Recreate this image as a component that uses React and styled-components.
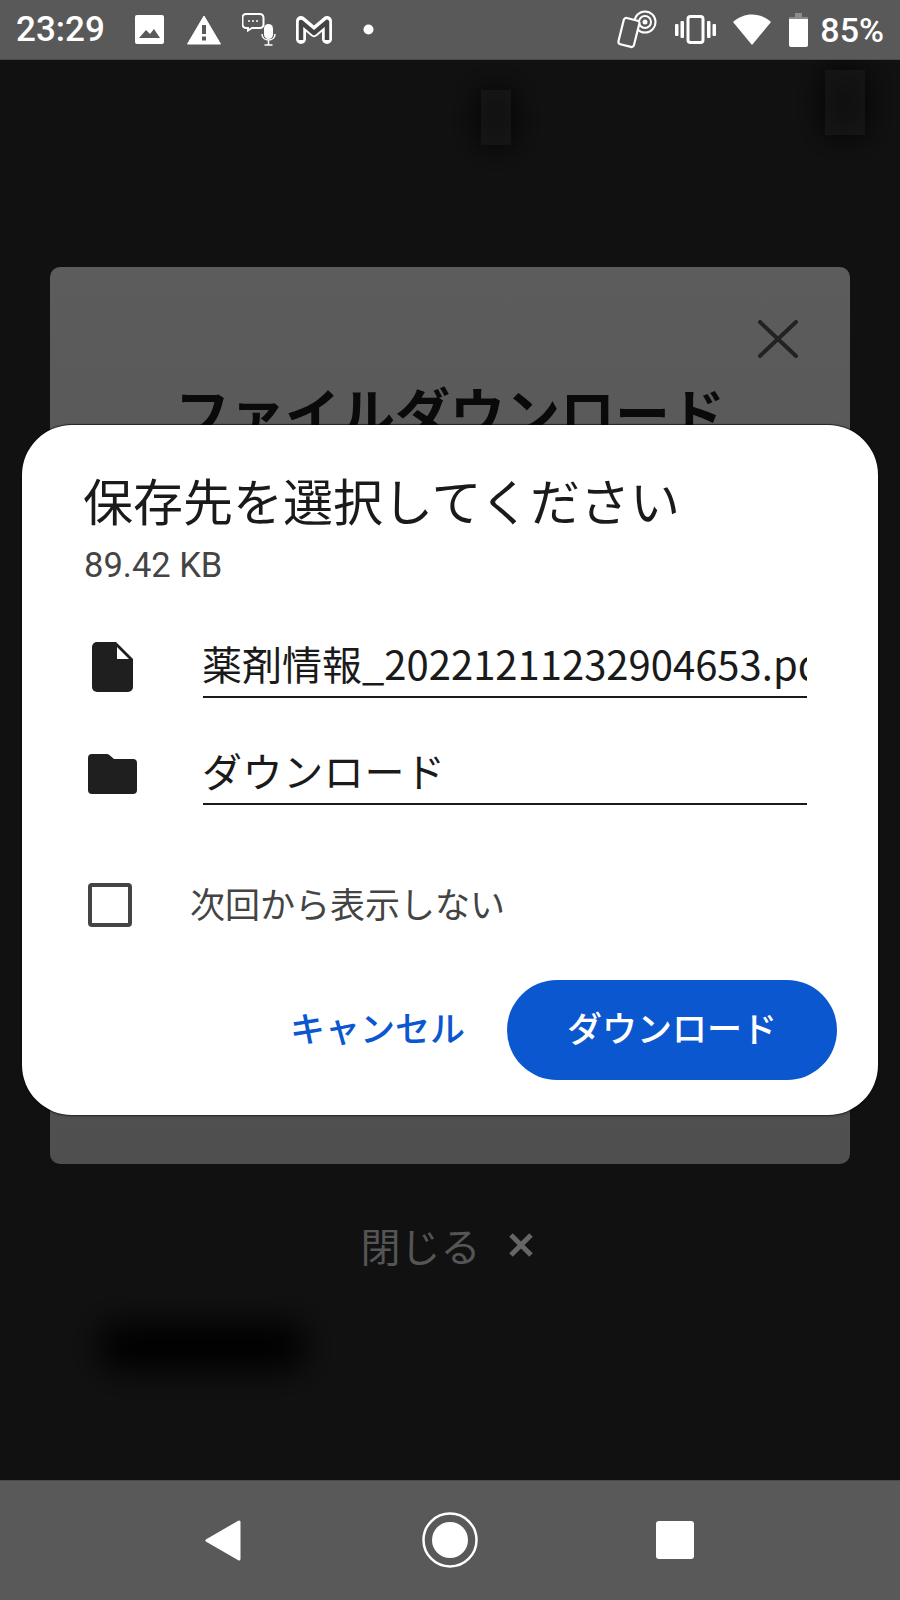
import React from 'react'
import styled, { createGlobalStyle } from 'styled-components'

const JP = `"Noto Sans CJK JP", "Roboto", sans-serif`
const BAR = '#595959'

const GlobalStyle = createGlobalStyle`
  html, body {
    margin: 0;
    padding: 0;
    background: #111;
  }
  * { box-sizing: border-box; }
`

const Screen = styled.div`
  width: 900px;
  height: 1600px;
  display: flex;
  flex-direction: column;
  overflow: hidden;
`

const StatusBar = styled.div`
  height: 60px;
  flex: none;
  background: ${BAR};
  display: flex;
  align-items: center;
  justify-content: space-between;
  padding: 0 16px;
  border-bottom: 1px solid #4a4a4a;
  color: #fff;
  font-family: Roboto, sans-serif;
`

const StatusGroup = styled.div`
  display: flex;
  align-items: center;
`

const Clock = styled.span`
  font-size: 35px;
  font-weight: 500;
  line-height: 60px;
  width: 87px;
  white-space: nowrap;
`

const Percent = styled.span`
  font-size: 34px;
  font-weight: 500;
  line-height: 60px;
  margin-left: 12px;
`

const StatusIcon = styled.svg`
  display: block;
  flex: none;
  margin-left: ${p => p.$gap || 0}px;
`

const Main = styled.div`
  flex: 1;
  position: relative;
  background: #111;
  padding-top: 207px;
  display: flex;
  flex-direction: column;
  align-items: center;
`

const BlurLayer = styled.svg`
  position: absolute;
  left: 0;
  top: 0;
`

const BackCard = styled.div`
  position: relative;
  width: 800px;
  height: 897px;
  flex: none;
  border-radius: 10px;
  background: linear-gradient(#5c5c5c, #4f4f4f);
  text-align: center;
`

const BackClose = styled.svg`
  position: absolute;
  right: 52px;
  top: 53px;
`

const BackTitle = styled.h2`
  margin: 0;
  padding-top: 107px;
  font-family: ${JP};
  font-size: 55px;
  line-height: 72px;
  font-weight: 700;
  color: #0a0a0a;
`

const CloseRow = styled.div`
  margin-top: 53px;
  height: 56px;
  display: flex;
  align-items: center;
  gap: 27px;
  position: relative;
  font-family: ${JP};
  font-size: 40px;
  color: #555;
  transform: translateX(-3px);
`

const Dialog = styled.div`
  position: absolute;
  left: 22px;
  top: 365px;
  width: 856px;
  height: 690px;
  background: #fff;
  border-radius: 50px;
  padding-top: 43px;
  box-shadow: 0 -1px 1px rgba(0, 0, 0, 0.6), 0 1px 2px rgba(0, 0, 0, 0.6);
`

const Title = styled.h1`
  margin: 0 0 0 61px;
  font-family: ${JP};
  font-size: 50px;
  line-height: 62px;
  font-weight: 400;
  color: #1a1a1a;
`

const Size = styled.div`
  margin: 15px 0 0 62px;
  font-family: Roboto, sans-serif;
  font-size: 34.5px;
  line-height: 40px;
  color: #444;
`

const FieldRow = styled.div`
  margin: ${p => p.$top}px 0 0 66px;
  display: grid;
  grid-template-columns: 115px 604px;
  align-items: center;
`

const Field = styled.div`
  height: 63px;
  border-bottom: 2px solid #1a1a1a;
  font-family: ${JP};
  font-size: 40px;
  line-height: 57px;
  letter-spacing: ${p => p.$spacing || 0}px;
  color: #1a1a1a;
  white-space: nowrap;
  overflow: hidden;
  text-indent: -1px;
`

const CheckRow = styled.label`
  margin: 78px 0 0 66px;
  height: 44px;
  display: flex;
  align-items: center;
  gap: 58px;
`

const Box = styled.span`
  width: 44px;
  height: 44px;
  flex: none;
  border: 4px solid #444;
  border-radius: 4px;
`

const CheckText = styled.span`
  font-family: ${JP};
  font-size: 35px;
  line-height: 40px;
  padding-bottom: 4px;
  color: #444;
  white-space: nowrap;
`

const Actions = styled.div`
  margin-top: 53px;
  padding-right: 41px;
  display: flex;
  justify-content: flex-end;
  align-items: center;
  gap: 42px;
`

const CancelButton = styled.button`
  border: 0;
  padding: 0 0 8px;
  background: none;
  font-family: ${JP};
  font-size: 35px;
  font-weight: 500;
  color: #0b57cf;
`

const PrimaryButton = styled.button`
  width: 330px;
  height: 100px;
  border: 0;
  border-radius: 50px;
  padding: 0 0 8px;
  background: #0b57cf;
  font-family: ${JP};
  font-size: 35px;
  font-weight: 500;
  color: #fff;
`

const NavBar = styled.div`
  height: 120px;
  flex: none;
  background: ${BAR};
  border-top: 1px solid #4a4a4a;
  position: relative;
  display: grid;
  grid-template-columns: 205px 40px 177px 55px 179px 38px;
  align-items: center;
  padding-bottom: 1px;
`

const NavIcon = styled.svg`
  display: block;
  grid-column: ${p => p.$col};
`

const App = () => (
  <Screen>
    <GlobalStyle />
    <StatusBar>
      <StatusGroup>
        <Clock>23:29</Clock>
        <StatusIcon $gap={32} width="29" height="29" viewBox="0 0 29 29">
          <rect width="29" height="29" rx="2" fill="#fff" />
          <path d="M4 23l7-8 4 4 4-5 6 9z" fill={BAR} />
        </StatusIcon>
        <StatusIcon $gap={23} width="34" height="30" viewBox="0 0 34 30">
          <path d="M17 1L33.500 29H.5z" fill="#fff" stroke="#fff" strokeLinejoin="round" />
          <rect x="15" y="10" width="4" height="9" fill={BAR} />
          <rect x="15" y="21.500" width="4" height="4" fill={BAR} />
        </StatusIcon>
        <StatusIcon $gap={21} width="34" height="33" viewBox="0 0 34 33">
          <path d="M4 1h14a3.500 3.500 0 0 1 3.500 3.500v7a3.500 3.500 0 0 1-3.500 3.500h-8l-4 2.500v-2.500h-2a3.500 3.500 0 0 1-3.500-3.500v-7a3.500 3.500 0 0 1 3.500-3.500z" fill="none" stroke="#fff" strokeWidth="2" />
          <circle cx="7" cy="8" r="1" fill="#fff" />
          <circle cx="11" cy="8" r="1" fill="#fff" />
          <circle cx="15" cy="8" r="1" fill="#fff" />
          <rect x="22" y="11" width="9" height="15" rx="4.500" fill="#fff" />
          <path d="M20 21c0 8 13 8 13 0M26.500 27v5M22.500 32h8" fill="none" stroke="#fff" strokeWidth="1.500" />
        </StatusIcon>
        <StatusIcon $gap={20} width="36" height="28" viewBox="0 0 36 28">
          <path d="M5 23V5l13 11L31 5v18" fill="none" stroke="#fff" strokeWidth="10" strokeLinejoin="round" strokeLinecap="round" />
          <path d="M5 24V6l13 11L31 6v18" fill="none" stroke="#444" strokeWidth="4.500" strokeLinejoin="round" />
        </StatusIcon>
        <StatusIcon $gap={31} width="11" height="11" viewBox="0 0 11 11">
          <circle cx="5.500" cy="5.500" r="5" fill="#fff" />
        </StatusIcon>
      </StatusGroup>
      <StatusGroup>
        <StatusIcon width="40" height="39" viewBox="0 0 40 39">
          <circle cx="28" cy="12" r="10.500" fill="none" stroke="#fff" strokeWidth="2" />
          <circle cx="28" cy="12" r="6" fill="none" stroke="#fff" strokeWidth="2" />
          <circle cx="28" cy="12" r="2.500" fill="#fff" />
          <rect x="4" y="9" width="16" height="27" rx="2.500" transform="rotate(14 12 22)" fill={BAR} stroke="#fff" strokeWidth="2.200" />
        </StatusIcon>
        <StatusIcon $gap={18} width="41" height="29" viewBox="0 0 41 29">
          <rect x="13" y="1.500" width="15" height="26" rx="2.500" fill="none" stroke="#fff" strokeWidth="3" />
          <rect x="0" y="9" width="3.500" height="12" rx="1" fill="#fff" />
          <rect x="5.500" y="6" width="3.500" height="17" rx="1" fill="#fff" />
          <rect x="32" y="6" width="3.500" height="17" rx="1" fill="#fff" />
          <rect x="37.500" y="9" width="3.500" height="12" rx="1" fill="#fff" />
        </StatusIcon>
        <StatusIcon $gap={17} width="38" height="31" viewBox="0 0 38 31">
          <path d="M0 8C11-2 27-2 38 8L19 31z" fill="#fff" />
        </StatusIcon>
        <StatusIcon $gap={18} width="19" height="34" viewBox="0 0 19 34">
          <path d="M6 0h7v4h5a1 1 0 0 1 1 1v6H0V5a1 1 0 0 1 1-1h5z" fill="#8c8c8c" />
          <path d="M0 6h19v26a2 2 0 0 1-2 2H2a2 2 0 0 1-2-2z" fill="#fff" />
        </StatusIcon>
        <Percent>85%</Percent>
      </StatusGroup>
    </StatusBar>

    <Main>
      <BlurLayer width="900" height="1420" viewBox="0 0 900 1420">
        <defs>
          <filter id="soft" x="-100%" y="-100%" width="300%" height="300%">
            <feGaussianBlur stdDeviation="16" />
          </filter>
        </defs>
        <g filter="url(#soft)">
          <rect x="100" y="1262" width="205" height="48" rx="16" fill="#020202" />
          <rect x="480" y="30" width="32" height="55" fill="#100f0c" />
          <rect x="825" y="10" width="40" height="65" fill="#100f0c" />
        </g>
      </BlurLayer>
      <BackCard>
        <BackClose width="40" height="38" viewBox="0 0 40 38">
          <path d="M2 2l36 34M38 2L2 36" stroke="#222" strokeWidth="4" strokeLinecap="round" />
        </BackClose>
        <BackTitle>ファイルダウンロード</BackTitle>
      </BackCard>
      <CloseRow>
        閉じる
        <svg width="26" height="24" viewBox="0 0 26 24">
          <path d="M3 2l20 20M23 2L3 22" stroke="#666" strokeWidth="5" />
        </svg>
      </CloseRow>

      <Dialog>
        <Title>保存先を選択してください</Title>
        <Size>89.42 KB</Size>
        <FieldRow $top={50}>
          <svg width="49" height="50" viewBox="0 0 49 50">
            <path d="M9 0h19l17 17v28a5 5 0 0 1-5 5H9a5 5 0 0 1-5-5V5a5 5 0 0 1 5-5z" fill="#1f1f1f" />
            <path d="M29 5l12 12H29z" fill="#fff" />
          </svg>
          <Field>薬剤情報_20221211232904653.pdf</Field>
        </FieldRow>
        <FieldRow $top={44}>
          <svg width="49" height="40" viewBox="0 0 49 40">
            <path d="M4 0h15a4 4 0 0 1 3 1.500L26 5h19a4 4 0 0 1 4 4v27a4 4 0 0 1-4 4H4a4 4 0 0 1-4-4V4a4 4 0 0 1 4-4z" fill="#1f1f1f" />
          </svg>
          <Field $spacing={0.6}>ダウンロード</Field>
        </FieldRow>
        <CheckRow>
          <Box />
          <CheckText>次回から表示しない</CheckText>
        </CheckRow>
        <Actions>
          <CancelButton>キャンセル</CancelButton>
          <PrimaryButton>ダウンロード</PrimaryButton>
        </Actions>
      </Dialog>
    </Main>

    <NavBar>
      <NavIcon $col={2} width="36" height="41" viewBox="0 0 36 41">
        <path d="M34 2v37L2 20.500z" fill="#fff" stroke="#fff" strokeWidth="3" strokeLinejoin="round" />
      </NavIcon>
      <NavIcon $col={4} width="56" height="56" viewBox="0 0 56 56">
        <circle cx="28" cy="28" r="26.500" fill="none" stroke="#fff" strokeWidth="2.500" />
        <circle cx="28" cy="28" r="18" fill="#fff" />
      </NavIcon>
      <NavIcon $col={6} width="38" height="38" viewBox="0 0 38 38">
        <rect width="38" height="38" rx="3" fill="#fff" />
      </NavIcon>
    </NavBar>
  </Screen>
)

export default App
